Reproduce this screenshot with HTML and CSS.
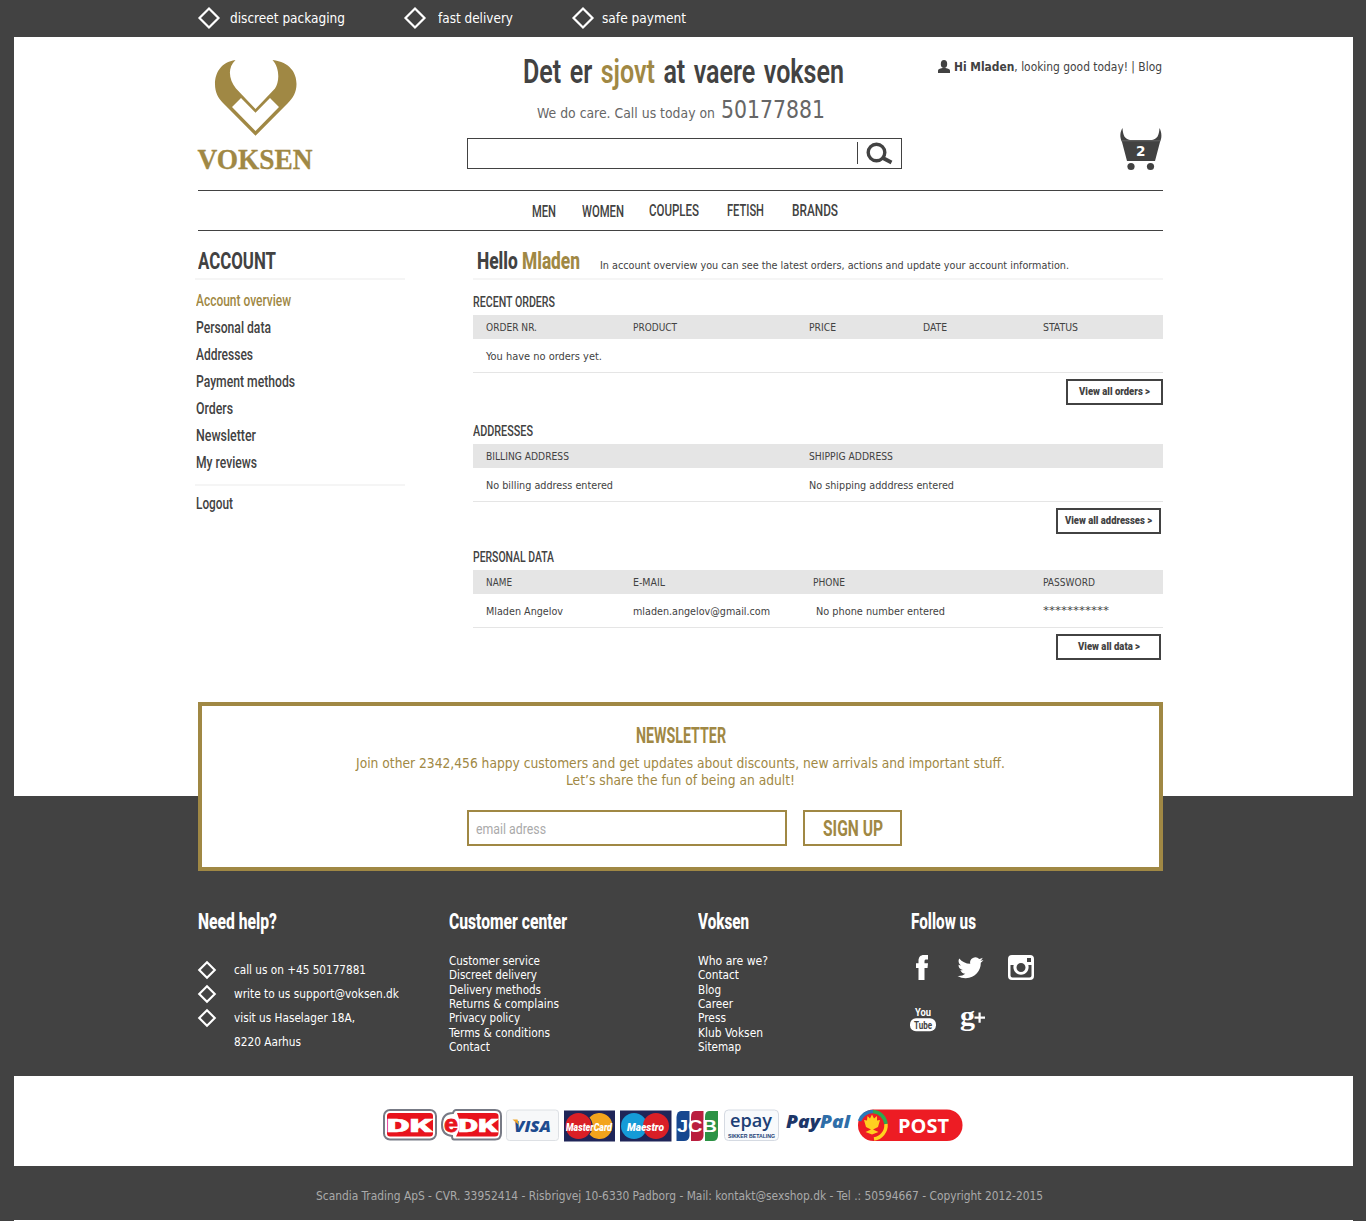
FILE: index.html
```html
<!DOCTYPE html>
<html lang="en">
<head>
<meta charset="utf-8">
<title>Voksen - Account</title>
<link rel="stylesheet" href="styles.css">
</head>
<body>
<div class="topbar">
  <div class="usp usp-a"><svg class="diamond" viewBox="0 0 22 22"><path d="M11 1.5 20.5 11 11 20.5 1.5 11Z"/></svg><span class="fit" data-w="115">discreet packaging</span></div>
  <div class="usp usp-b"><svg class="diamond" viewBox="0 0 22 22"><path d="M11 1.5 20.5 11 11 20.5 1.5 11Z"/></svg><span class="fit" data-w="75">fast delivery</span></div>
  <div class="usp usp-c"><svg class="diamond" viewBox="0 0 22 22"><path d="M11 1.5 20.5 11 11 20.5 1.5 11Z"/></svg><span class="fit" data-w="84">safe payment</span></div>
</div>

<div class="sheet">
  <header class="header">
    <a class="logo">
      <svg width="120" height="120" viewBox="195 56 120 120">
        <path fill="#a08844" d="M235.500 60C221 62 215 73 215 84C215 92 218 98 223 103L255.500 135.700L288 103C293 98 296.500 92 296.500 84C296.500 73 290 62 272.500 60C280 68 279.500 82 275 88.500L255.500 109L236 88.500C229 80 227 68 235.500 60Z"/>
        <path fill="#fff" d="M241 98 255.500 112.800 270 98 279 107 255.500 131 232 107Z"/>
        <text class="logo-text" x="197.500" y="169" textLength="115" lengthAdjust="spacingAndGlyphs">VOKSEN</text>
      </svg>
    </a>
    <div class="center">
      <div class="slogan cond"><span class="fit" data-w="321">Det er <b class="gold">sjovt</b> at vaere voksen</span></div>
      <div class="phone"><span class="fit" data-w="178">We do care. Call us today on</span><span class="fit big" data-w="104">50177881</span></div>
      <div class="search">
        <svg viewBox="0 0 44 29"><path d="M.5 3v22" stroke="#424242" stroke-width="1"/><circle cx="19.500" cy="13.500" r="8.300" fill="none" stroke="#424242" stroke-width="3.400"/><path d="M25 18.500 34.500 23.500" stroke="#424242" stroke-width="3.800"/></svg>
      </div>
    </div>
    <div class="user">
      <div class="greet"><svg viewBox="0 0 12 13"><ellipse cx="6" cy="4" rx="3.200" ry="4"/><path d="M0 13v-2.500Q0 9 2.500 8.500L4.500 8h3l2 .500Q12 9 12 10.500V13Z"/></svg><span class="fit" data-w="208"><b>Hi Mladen</b>, looking good today! | Blog</span></div>
      <svg class="cart" viewBox="0 0 42 43"><path d="M2.500 0C3 8 5 11 10 12H32C37 11 39 8 39.500 0C42 5 42 10 40 14L35 33H7L2 14C-.500 9 0 4 2.500 0Z"/><circle cx="11" cy="38.500" r="3.600"/><circle cx="30.500" cy="38.500" r="3.600"/><path d="M1.500 12.800H40.500" stroke="#8a8a8a" stroke-width=".500"/><text x="16" y="27.500" textLength="9.500" lengthAdjust="spacingAndGlyphs">2</text></svg>
    </div>
  </header>
  <nav class="nav cond">
    <a class="fit low" data-w="24">MEN</a><a class="fit low" data-w="42">WOMEN</a><a class="fit" data-w="50">COUPLES</a><a class="fit" data-w="37">FETISH</a><a class="fit" data-w="46">BRANDS</a>
  </nav>

  <div class="main">
    <aside class="side cond">
      <h2><span class="fit" data-w="78">ACCOUNT</span></h2>
      <ul>
        <li class="gold"><span class="fit" data-w="95">Account overview</span></li>
        <li><span class="fit" data-w="75">Personal data</span></li>
        <li><span class="fit" data-w="57">Addresses</span></li>
        <li><span class="fit" data-w="99">Payment methods</span></li>
        <li><span class="fit" data-w="37">Orders</span></li>
        <li><span class="fit" data-w="60">Newsletter</span></li>
        <li><span class="fit" data-w="61">My reviews</span></li>
      </ul>
      <div class="logout"><span class="fit" data-w="37">Logout</span></div>
    </aside>
    <main class="content">
      <div class="hello"><h1 class="cond fit" data-w="103">Hello <span class="gold">Mladen</span></h1><p class="fit" data-w="469">In account overview you can see the latest orders, actions and update your account information.</p></div>

      <section class="orders">
        <h3 class="cond"><span class="fit" data-w="82">RECENT ORDERS</span></h3>
        <div class="row head"><span class="fit" data-w="51">ORDER NR.</span><span class="fit" data-w="44">PRODUCT</span><span class="fit" data-w="27">PRICE</span><span class="fit" data-w="24">DATE</span><span class="fit" data-w="35">STATUS</span></div>
        <div class="row"><span class="fit" data-w="116">You have no orders yet.</span></div>
        <a class="btn cond"><span class="fit" data-w="71">View all orders &gt;</span></a>
      </section>

      <section class="addresses">
        <h3 class="cond"><span class="fit" data-w="60">ADDRESSES</span></h3>
        <div class="row head"><span class="fit" data-w="83">BILLING ADDRESS</span><span class="fit" data-w="84">SHIPPIG ADDRESS</span></div>
        <div class="row"><span class="fit" data-w="127">No billing address entered</span><span class="fit" data-w="145">No shipping adddress entered</span></div>
        <a class="btn cond"><span class="fit" data-w="87">View all addresses &gt;</span></a>
      </section>

      <section class="personal">
        <h3 class="cond"><span class="fit" data-w="81">PERSONAL DATA</span></h3>
        <div class="row head"><span class="fit" data-w="26">NAME</span><span class="fit" data-w="32">E-MAIL</span><span class="fit" data-w="32">PHONE</span><span class="fit" data-w="52">PASSWORD</span></div>
        <div class="row"><span class="fit" data-w="77">Mladen Angelov</span><span class="fit" data-w="137">mladen.angelov@gmail.com</span><span class="fit inset" data-w="129">No phone number entered</span><span class="fit stars" data-w="66">***********</span></div>
        <a class="btn cond"><span class="fit" data-w="62">View all data &gt;</span></a>
      </section>
    </main>
  </div>

  <section class="newsletter">
    <h2 class="cond"><span class="fit" data-w="90">NEWSLETTER</span></h2>
    <p><span class="fit" data-w="649">Join other 2342,456 happy customers and get updates about discounts, new arrivals and important stuff.</span></p>
    <p><span class="fit" data-w="229">Let’s share the fun of being an adult!</span></p>
    <form>
      <div class="email cond"><span class="fit" data-w="70">email adress</span></div>
      <div class="signup cond"><span class="fit" data-w="60">SIGN UP</span></div>
    </form>
  </section>
</div>

<footer class="footer">
  <div class="help">
    <h4 class="cond"><span class="fit" data-w="79">Need help?</span></h4>
    <ul>
      <li><svg class="diamond" viewBox="0 0 22 22"><path d="M11 1.5 20.5 11 11 20.5 1.5 11Z"/></svg><span class="fit" data-w="132">call us on +45 50177881</span></li>
      <li><svg class="diamond" viewBox="0 0 22 22"><path d="M11 1.5 20.5 11 11 20.5 1.5 11Z"/></svg><span class="fit" data-w="165">write to us support@voksen.dk</span></li>
      <li><svg class="diamond" viewBox="0 0 22 22"><path d="M11 1.5 20.5 11 11 20.5 1.5 11Z"/></svg><span class="fit" data-w="121">visit us Haselager 18A,</span></li>
      <li class="plain"><span class="fit" data-w="67">8220 Aarhus</span></li>
    </ul>
  </div>
  <div class="links">
    <h4 class="cond"><span class="fit" data-w="118">Customer center</span></h4>
    <ul>
      <li><span class="fit" data-w="91">Customer service</span></li>
      <li><span class="fit" data-w="88">Discreet delivery</span></li>
      <li><span class="fit" data-w="92">Delivery methods</span></li>
      <li><span class="fit" data-w="110">Returns &amp; complains</span></li>
      <li><span class="fit" data-w="71">Privacy policy</span></li>
      <li><span class="fit" data-w="101">Terms &amp; conditions</span></li>
      <li><span class="fit" data-w="41">Contact</span></li>
    </ul>
  </div>
  <div class="links">
    <h4 class="cond"><span class="fit" data-w="51">Voksen</span></h4>
    <ul>
      <li><span class="fit" data-w="70">Who are we?</span></li>
      <li><span class="fit" data-w="41">Contact</span></li>
      <li><span class="fit" data-w="23">Blog</span></li>
      <li><span class="fit" data-w="35">Career</span></li>
      <li><span class="fit" data-w="28">Press</span></li>
      <li><span class="fit" data-w="65">Klub Voksen</span></li>
      <li><span class="fit" data-w="43">Sitemap</span></li>
    </ul>
  </div>
  <div class="follow">
    <h4 class="cond"><span class="fit" data-w="65">Follow us</span></h4>
    <div class="social">
      <svg viewBox="0 0 28 28"><path d="M8.500 26V14H6V9.300H8.500V7C8.500 3 10.500 1 13.800 1H18V5.500H16.500C15 5.500 14.500 6 14.500 7.300V9.300H18L17.500 14H14.500V26Z"/></svg>
      <svg viewBox="0 0 28 28"><path transform="translate(.5 1) scale(1.08 1.07)" d="M23.953 4.570a10 10 0 01-2.825.775 4.958 4.958 0 002.163-2.723c-.951.555-2.005.959-3.127 1.184a4.920 4.920 0 00-8.384 4.482C7.690 8.095 4.067 6.130 1.640 3.162a4.822 4.822 0 00-.666 2.475c0 1.710.870 3.213 2.188 4.096a4.904 4.904 0 01-2.228-.616v.060a4.923 4.923 0 003.946 4.827 4.996 4.996 0 01-2.212.085 4.936 4.936 0 004.604 3.417 9.867 9.867 0 01-6.102 2.105c-.390 0-.779-.023-1.170-.067a13.995 13.995 0 007.557 2.209c9.053 0 13.998-7.496 13.998-13.985 0-.210 0-.420-.015-.630A9.935 9.935 0 0024 4.590z"/></svg>
      <svg viewBox="0 0 28 28"><path fill-rule="evenodd" d="M5 1H23Q27 1 27 5V22Q27 26 23 26H5Q1 26 1 22V5Q1 1 5 1ZM20 4V8H24V4ZM3.500 11V21.500Q3.500 23.500 5.500 23.500H22.500Q24.500 23.500 24.500 21.500V11H21.300A7.600 7.600 0 1 1 6.700 11ZM14 9A4.500 4.500 0 1 0 14 18A4.500 4.500 0 1 0 14 9Z"/></svg>
      <svg viewBox="0 0 28 28"><text class="yt" x="5" y="10" textLength="16" lengthAdjust="spacingAndGlyphs">You</text><rect y="12.200" width="26" height="13" rx="6"/><text class="yt dark" x="4" y="23" textLength="18" lengthAdjust="spacingAndGlyphs">Tube</text></svg>
      <svg viewBox="0 0 28 28"><text class="gp" x="3" y="19" textLength="15" lengthAdjust="spacingAndGlyphs">g</text><path d="M17.500 10.500h4V6.500h2.200v4H28v2.200h-4.300v4h-2.200v-4h-4Z"/></svg>
    </div>
  </div>
</footer>

<div class="payments">
  <svg width="584" height="38" viewBox="381 1106 584 38">
    <g class="pay">
      <rect x="384" y="1110" width="52" height="29.500" rx="6" fill="#fff" stroke="#777a85" stroke-width="2"/>
      <rect x="387" y="1113" width="46" height="23.500" rx="3" fill="#e8131d"/>
      <text x="386.500" y="1132" class="dk" textLength="46" lengthAdjust="spacingAndGlyphs">DK</text>
      <path d="M456 1110H495Q501 1110 501 1116V1133Q501 1139.500 495 1139.500H454Q452 1139.500 452 1136Q442 1135 442 1125Q442 1113 453 1113Q454 1110 456 1110Z" fill="#fff" stroke="#777a85" stroke-width="2"/>
      <path fill="#e8131d" d="M457 1113H495Q498.500 1113 498.500 1116V1133Q498.500 1136.500 495 1136.500H456L459 1130V1119Z"/>
      <text x="444" y="1132" class="edk-e" textLength="14" lengthAdjust="spacingAndGlyphs">e</text>
      <text x="458" y="1132" class="dk" textLength="40" lengthAdjust="spacingAndGlyphs">DK</text>
      <rect x="506.500" y="1110" width="52" height="30.500" rx="3" fill="#f7f8f9" stroke="#dde0e4"/>
      <text x="514" y="1131.500" class="visa" textLength="37" lengthAdjust="spacingAndGlyphs">VISA</text><path d="M512.500 1119.500H517.500L519 1125Z" fill="#eda52c"/>
      <rect x="564" y="1110.500" width="51" height="31" fill="#1f2558"/><circle cx="578.500" cy="1126" r="13" fill="#d91f26"/><path d="M589.500 1117.500A13 13 0 1 1 589.500 1134.500A13 13 0 0 0 589.500 1117.500Z" fill="#f3a41c"/>
      <text x="566" y="1130.500" class="mc" textLength="46" lengthAdjust="spacingAndGlyphs">MasterCard</text>
      <rect x="620" y="1110.500" width="51.500" height="31" fill="#1f2558"/><circle cx="634" cy="1126" r="13" fill="#159bd7"/><circle cx="656" cy="1126" r="13" fill="#d91f26"/>
      <text x="627" y="1130.500" class="mc" textLength="37" lengthAdjust="spacingAndGlyphs">Maestro</text>
      <path fill="#17478f" d="M681 1111H689.500V1136Q689 1141 684 1141H676.500V1117Q677 1111 681 1111Z"/><path fill="#ba1f3f" d="M695 1111H703.500V1136Q703 1141 698 1141H691V1117Q691 1111 695 1111Z"/><path fill="#2c9245" d="M709 1111H718V1136Q717.500 1141 713 1141H705V1117Q705 1111 709 1111Z"/>
      <text x="677" y="1132" class="jcb" textLength="40" lengthAdjust="spacingAndGlyphs">JCB</text>
      <rect x="724.500" y="1110" width="54" height="30.500" rx="4" fill="#f8fafc" stroke="#d5dae2"/>
      <text x="730" y="1127" class="epay" textLength="42" lengthAdjust="spacingAndGlyphs">epay</text><text x="728" y="1138" class="epay-sub" textLength="47" lengthAdjust="spacingAndGlyphs">SIKKER BETALING</text>
      <text x="786" y="1128" class="paypal" textLength="64" lengthAdjust="spacingAndGlyphs">Pay<tspan fill="#2f6ea8">Pal</tspan></text>
      <rect x="858" y="1109.500" width="104.500" height="31.500" rx="15.500" fill="#ed1c24"/><g fill="none" stroke-width="3.500"><path stroke="#2a79b8" d="M859.500 1121A14 14 0 0 1 873 1111.500"/><path stroke="#2fa84f" d="M873 1111.500A14 14 0 0 1 886 1124"/><path stroke="#ffd21f" d="M886 1124A14 14 0 0 1 874 1139"/></g>
      <path fill="#ffcf20" d="M864 1120 867 1120.500 867.500 1116 870 1118.500 872 1114.500 874 1118.500 877 1116 877 1120.500 880 1120 878 1127 873 1129.500 878.500 1132 872 1134.500 865.500 1132 871 1129.500 866 1127Z"/>
      <text x="898" y="1132.500" class="post" textLength="51" lengthAdjust="spacingAndGlyphs">POST</text>
    </g>
  </svg>
</div>
<div class="copyright"><span class="fit" data-w="727">Scandia Trading ApS - CVR. 33952414 - Risbrigvej 10-6330 Padborg - Mail: kontakt@sexshop.dk - Tel .: 50594667 - Copyright 2012-2015</span></div>
<div class="end"></div>
<script src="fit.js"></script>
</body>
</html>
```
FILE: styles.css
```css
* { box-sizing: border-box; margin: 0; padding: 0; }
body { width: 1366px; height: 1221px; overflow: hidden; background: #424242; color: #424242; font: 12px "DejaVu Sans Condensed", "DejaVu Sans", sans-serif; font-stretch: condensed; }
ul { list-style: none; }
svg { overflow: visible; }
.cond { font-family: Roboto, sans-serif; font-stretch: normal; font-weight: 500; }
.gold { color: #a08844; }
.fit { display: inline-block; flex: none; white-space: pre; transform-origin: 0 50%; }
.diamond { width: 22px; height: 22px; flex: none; fill: none; stroke: #fff; stroke-width: 2.2; }

.topbar { display: flex; height: 37px; padding-left: 198px; color: #fff; font-size: 14px; line-height: 36px; }
.usp { display: flex; align-items: flex-start; }
.usp .diamond { margin-top: 7px; }
.usp-a { width: 206px; gap: 10px; }
.usp-b { width: 168px; gap: 12px; }
.usp-c { gap: 8px; }

.sheet { display: flow-root; width: 1339px; height: 759px; margin-left: 14px; padding-left: 184px; background: #fff; }
.header { display: grid; grid-template-columns: 269px 435px 261px; width: 965px; height: 154px; border-bottom: 1px solid #424242; }
.logo { margin: 19px 0 0 -3px; }
.logo-text { font: bold 29px "Liberation Serif", serif; fill: #a08844; stroke: #a08844; stroke-width: .3; }
.center { padding-top: 11px; }
.slogan { padding-left: 56px; font-size: 34px; line-height: 46px; font-weight: 600; word-spacing: 3px; }
.slogan b { font-weight: 600; }
.phone { display: flex; align-items: baseline; gap: 6px; height: 30px; margin-top: 1px; padding-left: 70px; font-size: 14px; line-height: 30px; color: #666; }
.big { font-size: 24px; }
.search { display: flex; justify-content: flex-end; height: 31px; margin-top: 13px; border: 1px solid #424242; }
.search svg { width: 44px; height: 29px; }
.user { display: flex; flex-direction: column; align-items: flex-end; padding: 20px 1px 0 0; }
.greet { display: flex; gap: 4px; height: 20px; line-height: 20px; }
.greet svg { width: 12px; height: 13px; margin-top: 3px; fill: #424242; }
.cart { width: 42px; height: 43px; margin-top: 51px; fill: #424242; }
.cart text { font: bold 14px "DejaVu Sans", sans-serif; fill: #fff; }

.nav { display: flex; column-gap: 26px; width: 965px; height: 40px; padding-left: 334px; border-bottom: 1px solid #424242; font-size: 16px; line-height: 39px; }
.nav .low { padding-top: 1px; }
.nav a:nth-child(3) { position: relative; left: -1px; }
.nav a:nth-child(4) { position: relative; left: 1px; }
.nav a:nth-child(5) { position: relative; left: 2.5px; }

.main { display: grid; grid-template-columns: 275px 690px; width: 965px; height: 471px; padding-top: 14px; }
.side { width: 210px; margin-left: -3px; font-size: 16px; }
.side h2 { height: 35px; padding-left: 3px; border-bottom: 2px solid #f5f5f5; font-size: 24.5px; line-height: 32px; font-weight: 700; }
.side ul { padding: 7px 0 8px 1px; border-bottom: 2px solid #f5f5f5; }
.side li { height: 27px; line-height: 27px; }
.logout { padding: 4px 0 0 1px; line-height: 27px; }
.hello { display: flex; align-items: baseline; gap: 20px; height: 35px; padding-left: 4px; border-bottom: 2px solid #f5f5f5; margin-bottom: 10px; }
.hello h1 { font-size: 24.5px; line-height: 32px; font-weight: 800; }
.hello p { font-size: 11px; }
.content section { display: flex; flex-direction: column; margin-bottom: 14px; }
.content .addresses { margin-bottom: 11px; }
.content h3 { height: 25px; font-size: 15px; line-height: 24px; font-weight: 500; }
.row { display: grid; height: 34px; padding-left: 13px; border-bottom: 1px solid #e5e5e5; font-size: 11px; line-height: 35px; }
.head { height: 24px; border: 0; background: #e5e5e5; font-size: 10px; line-height: 26px; }
.orders .row { grid-template-columns: 147px 176px 114px 120px auto; }
.addresses .row { grid-template-columns: 323px auto; }
.personal .row { grid-template-columns: 147px 180px 230px auto; }
.inset { margin-left: 3px; }
.stars { line-height: 34px; }
.btn { display: flex; justify-content: center; align-self: flex-end; width: 105px; height: 26px; margin: 6px 2px 0 0; border: 2px solid #424242; font-size: 11px; line-height: 22px; font-weight: 900; }
.orders .btn { width: 97px; margin-right: 0; }

.newsletter { position: relative; width: 965px; height: 169px; padding-top: 15px; border: 4px solid #a08844; background: #fff; color: #a08844; text-align: center; }
.newsletter h2 { height: 34px; font-size: 22px; line-height: 30px; font-weight: 700; }
.newsletter p { height: 17px; font-size: 14px; line-height: 17px; }
.newsletter form { display: flex; gap: 16px; padding: 21px 0 0 265px; }
.email, .signup { display: flex; height: 36px; border: 2px solid #a08844; line-height: 32px; }
.email { width: 320px; padding: 1px 0 0 7px; color: #aaa; font-size: 15px; font-weight: 400; }
.signup { width: 99px; justify-content: center; font-size: 22px; line-height: 33px; font-weight: 700; }

.footer { display: grid; grid-template-columns: 251px 249px 213px 1fr; height: 280px; padding: 111px 0 0 198px; color: #fff; }
.footer h4 { height: 30px; font-size: 22px; line-height: 30px; font-weight: 800; }
.help ul { padding-top: 21px; }
.help li { display: flex; gap: 18px; height: 24px; line-height: 24px; }
.help .plain { padding-left: 36px; }
.help .diamond { width: 18px; height: 18px; margin-top: 3px; stroke-width: 2.6; }
.links ul { padding-top: 17px; }
.links li { height: 14.35px; line-height: 14.35px; }
.social { display: grid; grid-template-columns: 47px 50px 28px; row-gap: 24px; margin: 17px 0 0 -1px; }
.social svg { width: 28px; height: 28px; fill: #fff; }
.yt { font: bold 11.5px/1 Roboto, sans-serif; }
.social .dark { fill: #424242; }
.gp { font: bold 27px "Liberation Serif", serif; }

.payments { width: 1339px; height: 90px; margin-left: 14px; padding: 30px 0 0 367px; background: #fff; }
.pay { font-family: "Liberation Sans", sans-serif; font-weight: bold; }
.dk { font: 900 19px Roboto, sans-serif; fill: #fff; stroke: #fff; stroke-width: .6; }
.edk-e { font-size: 23px; fill: #e8131d; stroke: #e8131d; stroke-width: .8; }
.visa { font: italic 800 16px "Open Sans", sans-serif; fill: #1d4b8f; }
.mc { font: italic 900 10.5px Roboto, sans-serif; fill: #fff; }
.jcb { font: bold 17px "Liberation Sans", sans-serif; fill: #fff; }
.epay { font: 600 18px "Open Sans", sans-serif; fill: #1c3f75; }
.epay-sub { font-size: 5px; fill: #1c3f75; }
.paypal { font: italic 800 18px "Open Sans", sans-serif; fill: #1d3668; }
.post { font: bold 19px "Open Sans", sans-serif; fill: #fff; }

.copyright { height: 54px; padding: 3px 0 0 316px; color: #aaa; line-height: 54px; }
.end { width: 1339px; height: 1px; margin-left: 14px; background: #fff; }
```
FILE: fit.js
```js
document.querySelectorAll('.fit').forEach(function (el) {
  var target = Number(el.dataset.w);
  el.style.justifySelf = 'start';
  var natural = el.getBoundingClientRect().width;
  el.style.transform = 'scaleX(' + target / natural + ')';
  el.style.marginRight = (target - natural) + 'px';
});
```
